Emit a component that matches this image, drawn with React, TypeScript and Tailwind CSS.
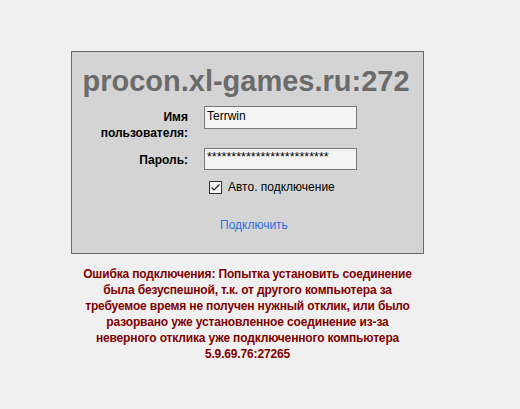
export default function App() {
  const font = { fontFamily: '"Liberation Sans", "Noto Sans", sans-serif' }
  return (
    <div
      className="w-[520px] h-[409px] bg-[#f0f0f0] overflow-hidden"
      style={font}
    >
      <div className="ml-[71px] pt-[51px] w-[353px]">
        <div className="h-[203px] border border-[#6b6b6b] bg-[#d4d4d4] flex flex-col">
          <h1 className="mt-[11px] text-center text-[29px] leading-[36px] font-bold text-[#6b6b6b] pr-[3px]">
            procon.xl-games.ru:272
          </h1>

          <div className="mt-[7px] grid grid-cols-[116px_153px] gap-x-[16px]">
            <label className="text-right text-[12px] leading-[16px] font-bold text-black pt-[3px]">
              Имя
              <br />
              пользователя:
            </label>
            <div className="h-[23px] border border-[#7a7a7a] bg-[#f4f4f4] px-[2px] text-[12px] leading-[19px] text-black">
              Terrwin
            </div>

            <label className="mt-[7px] text-right text-[12px] leading-[16px] font-bold text-black pt-[4px]">
              Пароль:
            </label>
            <div className="mt-[7px] h-[22px] border border-[#7a7a7a] bg-[#f4f4f4] pl-[2px] text-[12.5px] leading-[16px] text-black overflow-hidden">
              *************************
            </div>
          </div>

          <div className="mt-[9px] ml-[137px] flex items-center gap-[6px]">
            <span className="w-[13px] h-[13px] border border-[#333] bg-[#f4f4f4] flex items-center justify-center">
              <svg width="11" height="11" viewBox="0 0 11 11" fill="none">
                <path d="M1.5 5.5 L4 8 L9.5 2.5" stroke="#222" strokeWidth="1.2" />
              </svg>
            </span>
            <span className="text-[12px] leading-[16px] text-black">
              Авто. подключение
            </span>
          </div>

          <div className="mt-[22px] ml-[148px] text-[12px] leading-[16px] text-[#2f6fde]">
            Подключить
          </div>
        </div>
      </div>

      <p className="mt-[12px] w-[520px] pr-[25px] text-center text-[12px] leading-[16px] font-bold text-[#800000] tracking-[-0.15px]">
        Ошибка подключения: Попытка установить соединение
        <br />
        была безуспешной, т.к. от другого компьютера за
        <br />
        требуемое время не получен нужный отклик, или было
        <br />
        разорвано уже установленное соединение из-за
        <br />
        неверного отклика уже подключенного компьютера
        <br />
        5.9.69.76:27265
      </p>
    </div>
  )
}
